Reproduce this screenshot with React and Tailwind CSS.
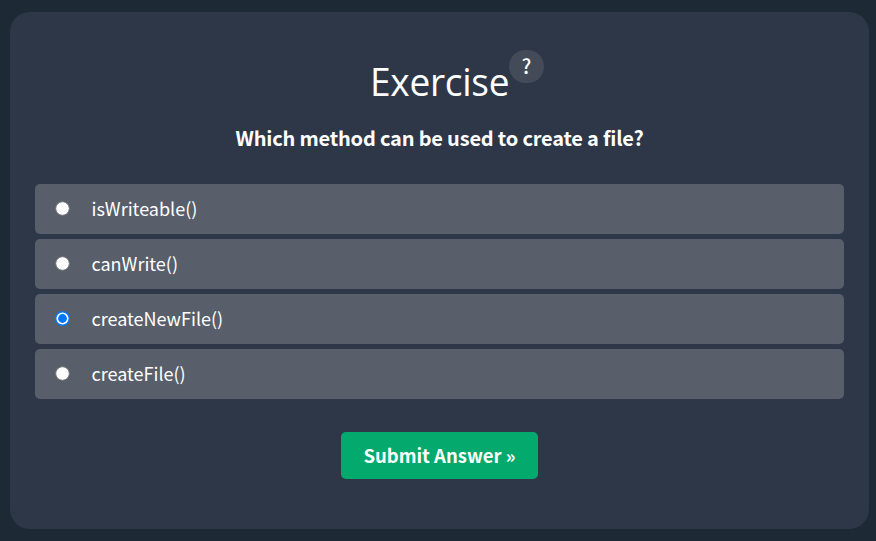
const options = ["isWriteable()", "canWrite()", "createNewFile()", "createFile()"];

function Radio({ checked }) {
  return (
    <svg className="-mt-[1px] size-[15px] shrink-0" viewBox="0 0 15 15" aria-hidden="true">
      <circle cx="7.5" cy="7.5" r="6.8" fill="#fff" stroke={checked ? "#0075ff" : "#767676"} strokeWidth={checked ? 1.4 : 1} />
      {checked && <circle cx="7.5" cy="7.5" r="4.4" fill="#0075ff" />}
    </svg>
  );
}

function Option({ label, checked }) {
  return (
    <label className="flex h-[50px] items-center rounded-[5px] bg-[#585f6b] pb-px pl-5">
      <Radio checked={checked} />
      <span className="-mt-[2px] ml-[21.5px] text-[18px] leading-[26px]">{label}</span>
    </label>
  );
}

export default function App() {
  return (
    <div className="h-[541px] w-[876px] bg-[#1d2a35] pl-[10px] pt-3 text-white [font-family:'Noto_Sans_CJK_SC',sans-serif]">
      <main className="flex h-[517px] w-[859px] flex-col rounded-[20px] bg-[#2e3748] px-[25px]">
        <div className="flex h-[108px] items-start justify-center pl-[35px] pt-[38px]">
          <h2 className="mt-px w-[139px] origin-left scale-x-[0.95] whitespace-nowrap text-[39px] leading-[60px] tracking-[-0.3px] [font-family:'Open_Sans',sans-serif]">Exercise</h2>
          <span className="flex h-[33px] w-[35px] items-center justify-center rounded-full bg-[#434b59] pb-px text-[20px] font-medium">?</span>
        </div>
        <p className="h-[64px] whitespace-nowrap text-center text-[20px] font-bold leading-[36px] tracking-[-0.19px]">
          Which method can be used to create a file?
        </p>
        <div className="flex flex-col gap-[5px]">
          {options.map((label, i) => (
            <Option key={label} label={label} checked={i === 2} />
          ))}
        </div>
        <button className="mt-[33px] h-[47px] w-[197px] self-center whitespace-nowrap rounded-[5px] bg-[#04aa6d] text-[18.5px] font-bold">
          Submit Answer »
        </button>
      </main>
    </div>
  );
}
